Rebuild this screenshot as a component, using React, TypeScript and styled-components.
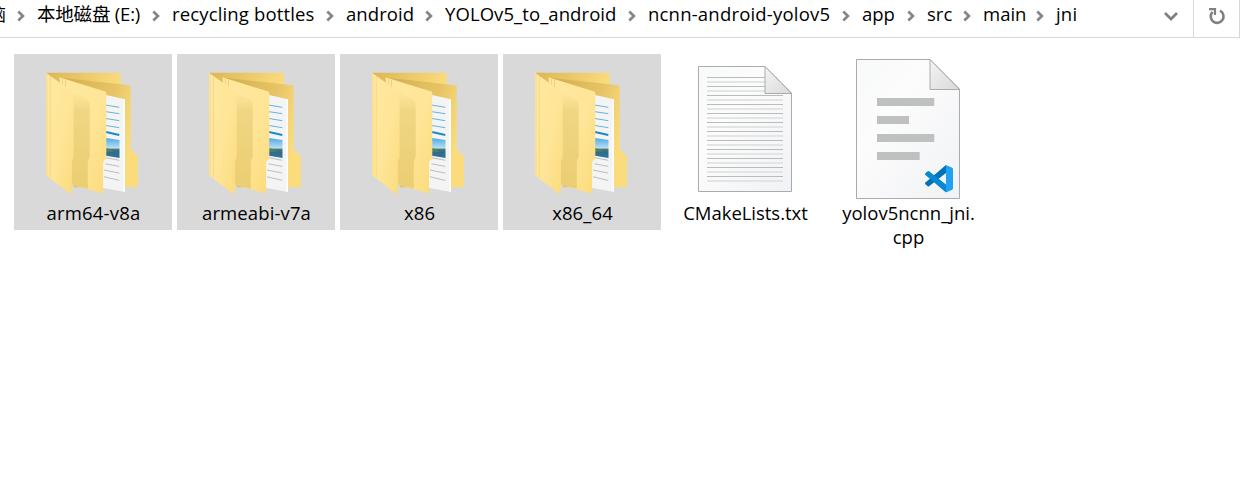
import React from 'react';
import styled, { createGlobalStyle } from 'styled-components';

const GlobalStyle = createGlobalStyle`
  * { box-sizing: border-box; }
  body {
    margin: 0;
    background: #fff;
    overflow: hidden;
    color: #000;
    font-family: "Open Sans", "Noto Sans CJK SC", sans-serif;
  }
`;

const Explorer = styled.main`
  width: 1249px;
  height: 479px;
  overflow: hidden;
`;

const AddressBar = styled.header`
  display: flex;
  width: 1240px;
  height: 38px;
  border-right: 1px solid #d9d9d9;
  border-bottom: 1px solid #d9d9d9;
`;

const Path = styled.nav`
  display: flex;
  flex: 1;
  height: 28px;
  align-items: center;
`;

const Crumb = styled.span<{ $width: number; $spacing?: number }>`
  flex: none;
  display: flex;
  width: ${(p) => p.$width}px;
  font-size: 18.5px;
  line-height: 28px;
  white-space: pre;
  letter-spacing: ${(p) => p.$spacing ?? 0}px;
`;

const ClippedCrumb = styled(Crumb)`
  justify-content: flex-end;
  overflow: hidden;
`;

const Separator = styled.svg`
  flex: none;
  width: 8px;
  height: 12px;
  margin: 3px 12px 0 11px;
`;

const BarButton = styled.button<{ $width: number; $divided?: boolean }>`
  display: flex;
  justify-content: center;
  width: ${(p) => p.$width}px;
  height: 37px;
  padding: 7px 0 0;
  border: 0;
  border-left: ${(p) => (p.$divided ? '1px solid #d9d9d9' : '0')};
  background: none;
`;

const Files = styled.section`
  display: flex;
  gap: 5px;
  padding: 16px 0 0 14px;
`;

const Tile = styled.article<{ $selected?: boolean }>`
  width: 158px;
  height: 176px;
  background: ${(p) => (p.$selected ? '#d9d9d9' : 'transparent')};
`;

const Artwork = styled.svg`
  display: block;
  width: 158px;
  height: 147px;
`;

const FileName = styled.div<{ $spacing: number }>`
  padding-left: 1px;
  font-size: 18.5px;
  line-height: 24px;
  text-align: center;
  white-space: pre;
  letter-spacing: ${(p) => p.$spacing}px;
`;

const Chevron = () => (
  <Separator viewBox="0 0 8 12">
    <path d="M1.3 1.5 5.9 6 1.3 10.5" fill="none" stroke="#868686" strokeWidth="2.7" />
  </Separator>
);

const FolderArt = () => (
  <Artwork viewBox="0 0 158 147">
    <defs>
      <linearGradient id="folderBack" x1="0" x2="1" y1="0" y2="0.25">
        <stop stopColor="#dcb655" />
        <stop offset="1" stopColor="#fbdc7c" />
      </linearGradient>
      <linearGradient id="folderRear" x1="0" x2="1" y1="0" y2="0.35">
        <stop stopColor="#d2ac4e" />
        <stop offset="0.65" stopColor="#e6c465" />
        <stop offset="1" stopColor="#fbdc7d" />
      </linearGradient>
      <linearGradient id="folderInner" x1="0" x2="0" y1="0" y2="1">
        <stop stopColor="#f3da8c" stopOpacity="0" />
        <stop offset="0.2" stopColor="#f0d684" />
        <stop offset="1" stopColor="#ebcd72" />
      </linearGradient>
      <linearGradient id="folderLeaf" x1="0" x2="1" y1="0" y2="1">
        <stop stopColor="#ffe89f" />
        <stop offset="0.55" stopColor="#fee597" />
        <stop offset="1" stopColor="#fbdb7c" />
      </linearGradient>
      <linearGradient id="photoSky" x1="0" x2="0" y1="0" y2="1">
        <stop stopColor="#4eaae6" />
        <stop offset="0.5" stopColor="#b9def2" />
        <stop offset="0.56" stopColor="#477c72" />
        <stop offset="0.7" stopColor="#35698a" />
        <stop offset="1" stopColor="#2b769f" />
      </linearGradient>
    </defs>
    <path d="M32 18.7H106q.8 0 .8.8V60H60Z" fill="url(#folderBack)" />
    <path d="M45 23.5 107 30.2 115.5 31.2q1.2.2 1.2 1.4V95l6.7 7q.5.5.5 1.3v28.5q0 1.5-1.5 1.5H60Z" fill="url(#folderRear)" />
    <path d="m91 40.7 20 4.6V138l-23-4.2Z" fill="#f4f4f4" />
    <path d="M109.5 45v92.7l1.5.3V45.3Z" fill="#fff" />
    <path d="m92 51.1 13.3 2.2M92 57.7l13.3 2M92 64.5l13.3 2.2M92 71.5l13.3 2.2" stroke="#65b4df" strokeWidth="1" />
    <path d="m92 78.1 13.3 2.8" stroke="#168bc7" strokeWidth="2" />
    <path d="m92 84 13.5 2.1v18L92 101.8Z" fill="url(#photoSky)" />
    <path d="m92 94.2 4 .8 3.5 2.5-7.5.5Z" fill="#4b845e" />
    <path d="m92 103.8 13.3 2.5M91.5 109.8l13.8 2.6M90 116l15.3 3.1M90 122.8l15.3 3.6" stroke="#b7b7b7" strokeWidth="0.9" />
    <path d="m45.3 23.3 46 14.2q1 .3 1 1.4v64.8q0 .7-.6 1.3l-1.9 2q-.7.7-.7 1.7v29.5q0 1.5-1.5 1L58 130.5Z" fill="url(#folderLeaf)" />
    <path d="M58 37 72.500 45.500q3.200 1.800 3.200 5.500v51.800l-1.900 4.600v27.400L57 130.300Z" fill="url(#folderInner)" />
    <path d="M48.500 25v6M51.500 26v7" stroke="#eacb79" strokeWidth="0.8" />
    <path d="m32 18.7 25.8 18.5q1.8 1.3 1.8 3.7v62.3q0 1-.7 1.9-1 1.1-1 2.5v32q0 1.5-1.2.6L32.4 121.4q-.4-.3-.4-1Z" fill="url(#folderLeaf)" />
    <path d="M36.3 22v102M33 20v101" stroke="#eacb79" strokeWidth="0.7" opacity="0.65" />
  </Artwork>
);

const textRows = Array.from({ length: 12 }, (_, i) => 23.5 + i * 9);

const PaperDefs = () => (
  <defs>
    <linearGradient id="paper" x1="0" x2="1" y1="0" y2="1">
      <stop stopColor="#f8f9f9" />
      <stop offset="0.35" stopColor="#fcfcfc" />
      <stop offset="1" stopColor="#f1f2f5" />
    </linearGradient>
    <linearGradient id="paperFold" x1="0" x2="1" y1="0" y2="1">
      <stop stopColor="#f4f4f4" />
      <stop offset="1" stopColor="#d9d9da" />
    </linearGradient>
  </defs>
);

const TextArt = () => (
  <Artwork viewBox="0 0 158 147">
    <PaperDefs />
    <path d="M32.5 12.5H99L125.500 39V137.500H32.500Z" fill="url(#paper)" stroke="#aaacac" />
    {textRows.map((y) => (
      <React.Fragment key={y}>
        <path d={`M41 ${y}h76`} stroke="#b9bcbc" />
        <path d={`M41 ${y + 4.5}h76`} stroke="#e3e5e5" strokeWidth="2" />
      </React.Fragment>
    ))}
    <path d="M99 12.5V39.500h26.500Z" fill="url(#paperFold)" stroke="#aaacac" />
    <path d="M99.800 12 126 38.300V12Z" fill="#fff" />
  </Artwork>
);

const CodeArt = () => (
  <Artwork viewBox="0 0 158 147">
    <PaperDefs />
    <path d="M27.500 5.500H101L130.500 35V144.500H27.500Z" fill="url(#paper)" stroke="#aaacac" />
    <path d="M101 5.500V35.500h29.500Z" fill="url(#paperFold)" stroke="#aaacac" />
    <path d="M48 44h57.300v8H48ZM48 62h32v8H48ZM48 80h57.300v8H48ZM48 98h42.700v8H48Z" fill="#bfc1c0" />
    <svg x="96" y="111" width="28" height="27.500" viewBox="0 0 100 100" preserveAspectRatio="none">
      <path d="M75 0 1.500 63.500q-3 3 0 6.200l7 7q3 2.700 6 .3L75 29Z" fill="#0072b8" />
      <path d="M75 100 1.500 36.500q-3-3 0-6.200l7-7q3-2.700 6-.3L75 71Z" fill="#0788d0" />
      <path d="M72 1.500q2-2 5-.8l20 9q3 1.400 3 5v70.600q0 3.600-3 5l-20 9q-3 1.200-5-.8l3-3.500V5Z" fill="#22a2ee" />
    </svg>
  </Artwork>
);

const crumbs = [
  { name: '本地磁盘 (E:)', width: 104, spacing: -0.2 },
  { name: 'recycling bottles', width: 143, spacing: 0.15 },
  { name: 'android', width: 68, spacing: 0.08 },
  { name: 'YOLOv5_to_android', width: 172, spacing: 0.08 },
  { name: 'ncnn-android-yolov5', width: 183, spacing: 0.2 },
  { name: 'app', width: 34, spacing: 0 },
  { name: 'src', width: 25, spacing: 0 },
  { name: 'main', width: 42, spacing: 0 },
  { name: 'jni', width: 22, spacing: 0.2 },
];

const files = [
  { name: 'arm64-v8a', spacing: 0.2, Art: FolderArt, selected: true },
  { name: 'armeabi-v7a', spacing: 0.12, Art: FolderArt, selected: true },
  { name: 'x86', spacing: 0.1, Art: FolderArt, selected: true },
  { name: 'x86_64', spacing: 0.1, Art: FolderArt, selected: true },
  { name: 'CMakeLists.txt', spacing: -0.03, Art: TextArt },
  { name: 'yolov5ncnn_jni.\ncpp', spacing: 0, Art: CodeArt },
];

export default function App() {
  return (
    <Explorer>
      <GlobalStyle />
      <AddressBar>
        <Path>
          <ClippedCrumb $width={6}>脑</ClippedCrumb>
          {crumbs.map((crumb) => (
            <React.Fragment key={crumb.name}>
              <Chevron />
              <Crumb $width={crumb.width} $spacing={crumb.spacing}>{crumb.name}</Crumb>
            </React.Fragment>
          ))}
        </Path>
        <BarButton $width={44} aria-label="Recent locations">
          <svg width="16" height="18" viewBox="0 0 16 18">
            <path d="m2 6 6 6 6-6" fill="none" stroke="#808080" strokeWidth="2.700" />
          </svg>
        </BarButton>
        <BarButton $width={46} $divided aria-label="Refresh">
          <svg width="19" height="18" viewBox="0 0 19 18">
            <path d="M5.600 4.900A6.400 6.400 0 1 0 13 3.700" fill="none" stroke="#808080" strokeWidth="2.600" />
            <path d="M2 2.200H8V8" fill="none" stroke="#808080" strokeWidth="2.200" />
          </svg>
        </BarButton>
      </AddressBar>
      <Files>
        {files.map(({ name, spacing, Art, selected }) => (
          <Tile key={name} $selected={selected}>
            <Art />
            <FileName $spacing={spacing}>{name}</FileName>
          </Tile>
        ))}
      </Files>
    </Explorer>
  );
}
